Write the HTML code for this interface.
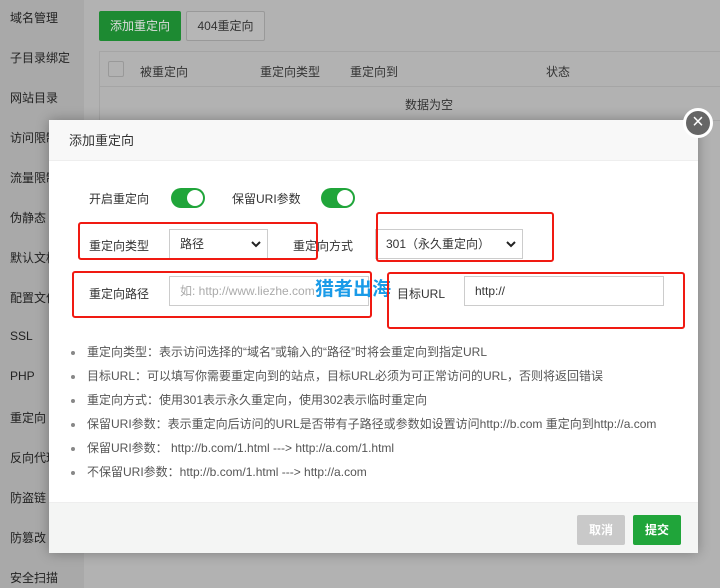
<!DOCTYPE html>
<html><head><meta charset="utf-8"><style>
*{box-sizing:border-box;margin:0;padding:0}
body{width:720px;height:588px;overflow:hidden;position:relative;background:#b2b2b2;font-family:"Liberation Sans","Noto Sans CJK SC",sans-serif;font-size:12px;color:#333}
.sb{position:absolute;left:0;top:0;width:84px;height:588px;background:#a9a9a9}
.sb div{position:absolute;left:10px;font-size:12px;color:#222}
.abs{position:absolute}
.modal{position:absolute;left:49px;top:120px;width:649px;height:433px;background:#fff;box-shadow:0 0 12px rgba(0,0,0,.3)}
.hd{height:41px;background:#f8f8f8;border-bottom:1px solid #eee;padding-left:20px;line-height:41px;font-size:13px;color:#333}
.ft{position:absolute;left:0;bottom:0;width:649px;height:51px;background:#f4f5f4;border-top:1px solid #eee}
.tg{position:absolute;width:34px;height:20px;border-radius:10px;background:#20a53a}
.tg:after{content:"";position:absolute;right:2px;top:2px;width:16px;height:16px;border-radius:50%;background:#fff}
.sel,.inp{position:absolute;border:1px solid #ccc;height:30px;line-height:28px;padding-left:10px;font-size:12px;background:#fff}
.sel svg{position:absolute;right:6px;top:11px}
.red{position:absolute;border:2px solid #f01a12;border-radius:3px}
ul{position:absolute;left:22px;top:224px;list-style:none}
ul li{height:24px;line-height:16px;color:#555;font-size:12px;position:relative;padding-left:16px}
ul li:before{content:"";position:absolute;left:0;top:7px;width:4px;height:4px;border-radius:50%;background:#888}
</style></head><body>
<div class="sb">
<div style="top:9px">域名管理</div><div style="top:49px">子目录绑定</div><div style="top:89px">网站目录</div><div style="top:129px">访问限制</div><div style="top:169px">流量限制</div><div style="top:209px">伪静态</div><div style="top:249px">默认文档</div><div style="top:289px">配置文件</div><div style="top:329px">SSL</div><div style="top:369px">PHP</div><div style="top:409px;">重定向</div><div style="top:449px">反向代理</div><div style="top:489px">防盗链</div><div style="top:529px">防篡改</div><div style="top:569px">安全扫描</div>
</div>
<div class="abs" style="left:99px;top:11px;width:82px;height:30px;background:#1d8a32;border-radius:2px;color:#ddd;line-height:30px;text-align:center">添加重定向</div>
<div class="abs" style="left:186px;top:11px;width:79px;height:30px;border:1px solid #999;border-radius:2px;background:#b6b6b6;line-height:28px;text-align:center;color:#333">404重定向</div>
<div class="abs" style="left:99px;top:51px;width:621px;height:70px;border:1px solid #a5a5a5;border-right:none"></div>
<div class="abs" style="left:99px;top:86px;width:621px;height:1px;background:#a5a5a5"></div>
<div class="abs" style="left:108px;top:61px;width:16px;height:16px;border:1px solid #999;border-radius:2px"></div>
<div class="abs" style="left:140px;top:63px;color:#333">被重定向</div>
<div class="abs" style="left:260px;top:63px;color:#333">重定向类型</div>
<div class="abs" style="left:350px;top:63px;color:#333">重定向到</div>
<div class="abs" style="left:546px;top:63px;color:#333">状态</div>
<div class="abs" style="left:405px;top:96px;color:#333">数据为空</div>
<div class="modal">
<div class="hd">添加重定向</div>
<div class="abs" style="left:40px;top:70px">开启重定向</div><div class="tg" style="left:122px;top:68px"></div>
<div class="abs" style="left:183px;top:70px">保留URI参数</div><div class="tg" style="left:272px;top:68px"></div>
<div class="abs" style="left:40px;top:117px">重定向类型</div>
<div class="sel" style="left:120px;top:109px;width:99px">路径<svg width="10" height="7" viewBox="0 0 10 7"><path d="M1 1l4 4 4-4" fill="none" stroke="#222" stroke-width="2"/></svg></div>
<div class="abs" style="left:244px;top:117px">重定向方式</div>
<div class="sel" style="left:326px;top:109px;width:148px">301（永久重定向）<svg width="10" height="7" viewBox="0 0 10 7"><path d="M1 1l4 4 4-4" fill="none" stroke="#222" stroke-width="2"/></svg></div>
<div class="abs" style="left:40px;top:165px">重定向路径</div>
<div class="inp" style="left:120px;top:156px;width:200px;color:#aaa">如: http://www.liezhe.com</div>
<div class="abs" style="left:348px;top:165px">目标URL</div>
<div class="inp" style="left:415px;top:156px;width:200px;color:#333">http://</div>
<div class="abs" style="left:266px;top:154px;color:#1a9be8;font-size:19px;font-weight:bold">猎者出海</div>
<ul>
<li>重定向类型：表示访问选择的“域名”或输入的“路径”时将会重定向到指定URL</li>
<li>目标URL：可以填写你需要重定向到的站点，目标URL必须为可正常访问的URL，否则将返回错误</li>
<li>重定向方式：使用301表示永久重定向，使用302表示临时重定向</li>
<li>保留URI参数：表示重定向后访问的URL是否带有子路径或参数如设置访问http://b.com 重定向到http://a.com</li>
<li>保留URI参数： http://b.com/1.html ---&gt; http://a.com/1.html</li>
<li>不保留URI参数：http://b.com/1.html ---&gt; http://a.com</li>
</ul>
<div class="ft">
<div class="abs" style="left:528px;top:12px;width:48px;height:30px;background:#c9c9c9;border-radius:2px;color:#fff;line-height:30px;text-align:center;font-weight:bold">取消</div>
<div class="abs" style="left:584px;top:12px;width:48px;height:30px;background:#20a53a;border-radius:2px;color:#fff;line-height:30px;text-align:center;font-weight:bold">提交</div>
</div>
</div>
<div class="abs" style="left:683px;top:108px;width:30px;height:30px;border-radius:50%;background:#666;border:3px solid #fff;color:#fff;font-size:20px;line-height:23px;text-align:center">×</div>
<div class="red" style="left:78px;top:222px;width:240px;height:38px"></div>
<div class="red" style="left:376px;top:212px;width:178px;height:50px"></div>
<div class="red" style="left:72px;top:271px;width:300px;height:47px"></div>
<div class="red" style="left:387px;top:272px;width:298px;height:57px"></div>
</body></html>
